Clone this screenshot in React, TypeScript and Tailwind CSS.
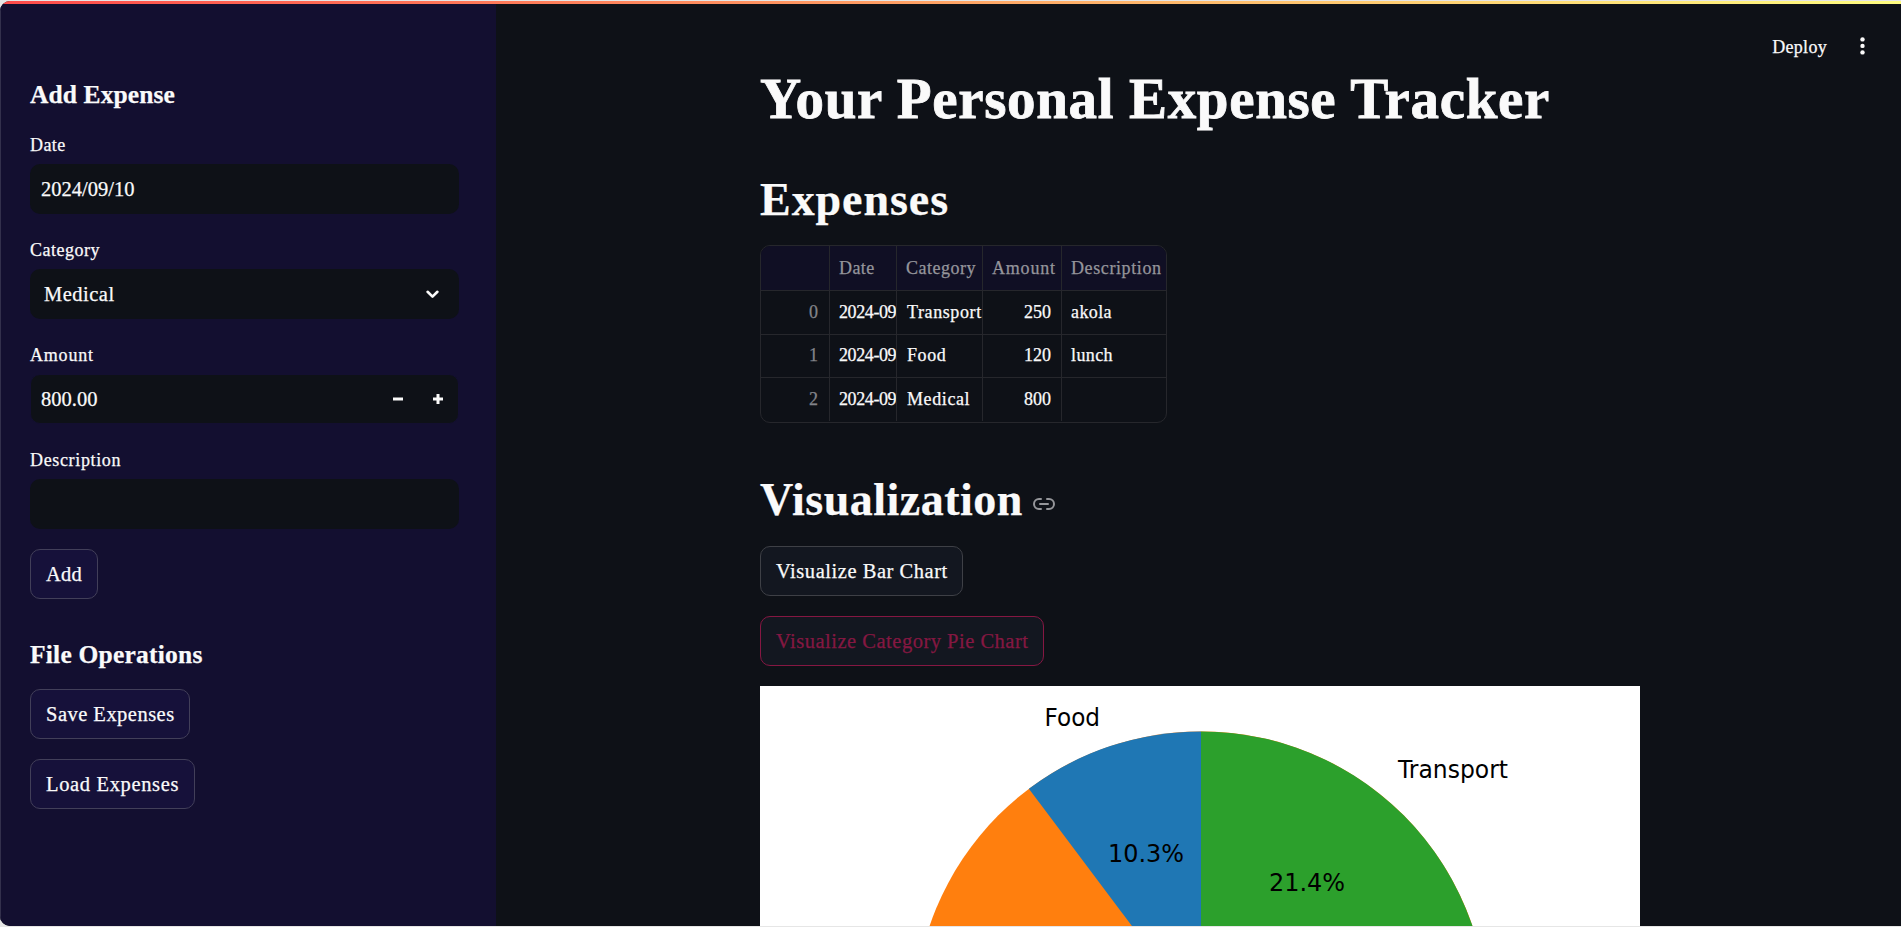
import React from "react";
import { Link2 } from "lucide-react";

const FIELD = "flex h-[50px] items-center rounded-[10px] bg-[#0e1117]";
const LABEL = "flex h-[35px] items-center pb-[3px] text-[18px]";
const BUTTON = "flex h-[50px] items-center rounded-[10px] border px-[15px] text-[20.5px] whitespace-nowrap";

function Sidebar() {
  return (
    <aside className="flex w-[496px] shrink-0 flex-col border-l border-[#33304c] bg-[#130f30] pl-[29px] pr-[37px]">
      <h2 className="mt-[73px] h-[35px] text-[25.5px] leading-[35px] font-bold tracking-[0.1px]">Add Expense</h2>
      <div className="mt-[17px] flex flex-col gap-5">
        <div>
          <div className={`${LABEL} tracking-[0.4px]`}>Date</div>
          <div className={`${FIELD} pl-[11px] text-[20.5px]`}>2024/09/10</div>
        </div>
        <div>
          <div className={`${LABEL} tracking-[0.5px]`}>Category</div>
          <div className={`${FIELD} justify-between pl-[14px] pr-5 text-[20.5px] tracking-[0.5px]`}>
            <span>Medical</span>
            <svg width="13" height="9" viewBox="0 0 13 9" fill="none" stroke="#fafafa" strokeWidth="2.6" strokeLinecap="round" strokeLinejoin="round">
              <path d="M1.6 1.8 6.5 6.6l4.9-4.8" />
            </svg>
          </div>
        </div>
        <div>
          <div className={`${LABEL} tracking-[0.8px]`}>Amount</div>
          <div className={`${FIELD} border border-[#130f30] pr-[15px] pl-[10px] text-[20.5px]`}>
            <span className="grow">800.00</span>
            <svg width="50" height="10" viewBox="0 0 50 10" fill="#fafafa">
              <path d="M0 3.5h10v3H0zM40 3.5h3.5V0h3v3.5H50v3h-3.5V10h-3V6.5H40z" />
            </svg>
          </div>
        </div>
        <div>
          <div className={`${LABEL} tracking-[0.65px]`}>Description</div>
          <div className={FIELD} />
        </div>
        <button className={`${BUTTON} w-[68px] border-[#423f59] bg-[#16113a] tracking-[0.2px]`}>Add</button>
      </div>
      <h2 className="mt-[38px] h-[35px] text-[25.5px] leading-[35px] font-bold tracking-[0.22px]">File Operations</h2>
      <div className="mt-[17px] flex flex-col gap-5">
        <button className={`${BUTTON} w-[160px] border-[#423f59] bg-[#16113a] tracking-[0.48px]`}>Save Expenses</button>
        <button className={`${BUTTON} w-[165px] border-[#423f59] bg-[#16113a] tracking-[0.65px]`}>Load Expenses</button>
      </div>
    </aside>
  );
}

const ROWS = [
  ["0", "2024-09", "Transport", "250", "akola"],
  ["1", "2024-09", "Food", "120", "lunch"],
  ["2", "2024-09", "Medical", "800", ""],
];

const CELL = "flex items-center overflow-hidden whitespace-nowrap border-[#26272c]";

function ExpenseTable() {
  return (
    <div className="h-[178px] w-[407px] overflow-hidden rounded-[10px] border border-[#26272c] text-[18px]">
      <div className="grid h-[45px] grid-cols-[69px_67px_86px_79px_1fr] border-b border-[#26272c] bg-[#100f24] text-[#95959b]">
        <div className={`${CELL} border-r`} />
        <div className={`${CELL} border-r pl-[9px] tracking-[0.4px]`}>Date</div>
        <div className={`${CELL} border-r pl-[9px] tracking-[0.5px]`}>Category</div>
        <div className={`${CELL} border-r pl-[9px] tracking-[0.8px]`}>Amount</div>
        <div className={`${CELL} pl-[9px] tracking-[0.6px]`}>Description</div>
      </div>
      {ROWS.map((r, i) => (
        <div
          key={r[0]}
          className={`grid grid-cols-[69px_67px_86px_79px_1fr] ${i < 2 ? "h-[43.67px] border-b border-[#26272c]" : "h-[43px]"}`}
        >
          <div className={`${CELL} justify-end border-r pr-[11px] text-[#83848a]`}>{r[0]}</div>
          <div className={`${CELL} border-r pl-[9px] tracking-[-0.4px]`}>{r[1]}</div>
          <div className={`${CELL} border-r pl-[10px] tracking-[0.6px]`}>{r[2]}</div>
          <div className={`${CELL} justify-end border-r pr-[10px]`}>{r[3]}</div>
          <div className={`${CELL} pl-[9px] tracking-[0.4px]`}>{r[4]}</div>
        </div>
      ))}
    </div>
  );
}

function PieChart() {
  return (
    <svg className="block shrink-0 bg-white" width="880" height="640" viewBox="760 686 880 640" fontFamily="'DejaVu Sans', sans-serif" fontSize="24" style={{ WebkitTextStroke: "0px" }}>
      <circle cx="1201" cy="1018" r="286.6" fill="#ff7f0e" />
      <path d="M1201 1018V731.4A286.6 286.6 0 0 0 1028.9 788.8Z" fill="#1f77b4" />
      <path d="M1201 1018V731.4A286.6 286.6 0 0 1 1480.4 1081.8Z" fill="#2ca02c" />
      <g fill="#000">
        <text x="1044.5" y="726" textLength="55.5" lengthAdjust="spacingAndGlyphs">Food</text>
        <text x="1398" y="778" textLength="110" lengthAdjust="spacingAndGlyphs">Transport</text>
        <text x="1108" y="862" textLength="76" lengthAdjust="spacingAndGlyphs">10.3%</text>
        <text x="1269" y="891" textLength="76" lengthAdjust="spacingAndGlyphs">21.4%</text>
      </g>
    </svg>
  );
}

export default function App() {
  return (
    <div className="h-[927px] w-full overflow-hidden bg-[#e6e6e6] py-px font-['Liberation_Serif',serif] text-[#fafafa] [-webkit-text-stroke:0.25px]">
      <div className="flex h-[925px] flex-col overflow-hidden rounded-l-[10px] bg-[#0e1117]">
        <div className="h-[3px] shrink-0 bg-[linear-gradient(90deg,#ff4b4b,#fffd80)]" />
        <div className="flex min-h-0 grow">
          <Sidebar />
          <main className="flex grow flex-col overflow-hidden pl-[264px]">
            <header className="flex h-[62px] shrink-0 items-end justify-end gap-[33px] pr-[36px] text-[18px] tracking-[0.3px]">
              <span className="mb-[7px] leading-6">Deploy</span>
              <svg className="mb-[11px]" width="5" height="18" viewBox="0 0 5 18" fill="#fafafa">
                <circle cx="2.5" cy="2.4" r="2.2" />
                <circle cx="2.5" cy="8.9" r="2.2" />
                <circle cx="2.5" cy="15.4" r="2.2" />
              </svg>
            </header>
            <h1 className="h-[66px] shrink-0 text-[57px] leading-[66px] font-bold tracking-[0.65px] whitespace-nowrap [-webkit-text-stroke:0.8px]">Your Personal Expense Tracker</h1>
            <h2 className="mt-[41px] h-[54px] shrink-0 text-[46px] leading-[54px] font-bold tracking-[0.95px]">Expenses</h2>
            <div className="mt-[18px] shrink-0">
              <ExpenseTable />
            </div>
            <div className="mt-[50px] flex h-[54px] shrink-0 items-center gap-[9px]">
              <h2 className="text-[46px] leading-[54px] font-bold tracking-[0.5px]">Visualization</h2>
              <Link2 className="mt-2 text-[#95969a]" size={24} strokeWidth={2} />
            </div>
            <div className="mt-[19px] flex shrink-0 flex-col gap-5">
              <button className={`${BUTTON} w-[203px] border-[#3e4046] bg-[#131720] tracking-[0.54px]`}>Visualize Bar Chart</button>
              <button className={`${BUTTON} w-[284px] border-[#851742] bg-[#131720] tracking-[0.5px] text-[#851742]`}>Visualize Category Pie Chart</button>
              <PieChart />
            </div>
          </main>
        </div>
      </div>
    </div>
  );
}
